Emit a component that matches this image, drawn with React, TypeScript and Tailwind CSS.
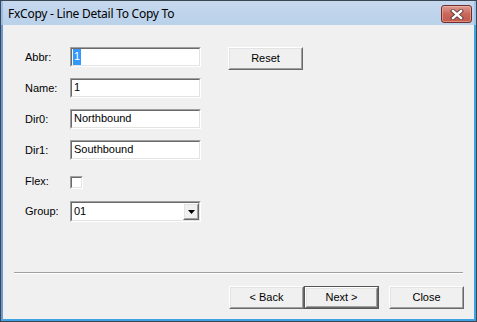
import React from "react";

function Sunken({ className = "", children }: { className?: string; children?: React.ReactNode }) {
  return (
    <div className={"border border-t-[#a0a0a0] border-l-[#a0a0a0] border-r-white border-b-white " + className}>
      <div className="w-full h-full border border-t-[#696969] border-l-[#696969] border-r-[#e3e3e3] border-b-[#e3e3e3] bg-white flex">
        {children}
      </div>
    </div>
  );
}

function Raised({ className = "", children }: { className?: string; children?: React.ReactNode }) {
  return (
    <div className={"border border-t-white border-l-white border-r-[#696969] border-b-[#696969] bg-[#f0f0f0] " + className}>
      <div className="w-full h-full border border-t-[#e3e3e3] border-l-[#e3e3e3] border-r-[#a0a0a0] border-b-[#a0a0a0] flex items-center justify-center">
        {children}
      </div>
    </div>
  );
}

function Btn({ label, isDefault = false }: { label: string; isDefault?: boolean }) {
  if (isDefault) {
    return (
      <div className="w-[75px] h-[23px] border border-[#555555]">
        <Raised className="w-full h-full">
          <span className="text-[11px] leading-[13px] text-black">{label}</span>
        </Raised>
      </div>
    );
  }
  return (
    <Raised className="w-[75px] h-[23px]">
      <span className="text-[11px] leading-[13px] text-black">{label}</span>
    </Raised>
  );
}

function Row({ label, value, selected = false }: { label: string; value: string; selected?: boolean }) {
  return (
    <div className="flex items-start h-[20px] mb-[11px]">
      <div className="w-[45px] mt-[4px] text-[11px] leading-[13px] text-black">{label}</div>
      <Sunken className="w-[131px] h-[20px]">
        <div className="pl-[1px] h-full text-[11px] leading-[15px] text-black flex items-start">
          {selected ? (
            <span className="bg-[#3399ff] text-white px-[1px] h-[16px] leading-[15px] inline-block">{value}</span>
          ) : (
            <span className="pl-[1px]">{value}</span>
          )}
        </div>
      </Sunken>
    </div>
  );
}

export default function App() {
  return (
    <div className="w-[477px] h-[322px] border border-[#3b4654] flex flex-col bg-[#b9d1ea] font-['Liberation_Sans',Arial,sans-serif] overflow-hidden">
      {/* title bar */}
      <div className="h-[24px] flex items-start bg-gradient-to-b from-[#c6d8ee] to-[#b9d1ea] border-l-2 border-l-[#9cbde3] border-r-2 border-r-[#9cc3e8]">
        <div className="pl-[5px] pt-[5px] font-['Noto_Sans',sans-serif] text-[12px] leading-[16px] tracking-[-0.25px] text-black flex-1">
          FxCopy - Line Detail To Copy To
        </div>
        <div className="mt-[4px] mr-[2px] w-[31px] h-[18px] rounded-[3px] border border-[#6e2e2a] bg-gradient-to-b from-[#dd9c92] via-[#c9675b] to-[#c35a4d] flex items-center justify-center shadow-[inset_0_0_0_1px_rgba(255,200,190,0.45)]">
          <svg width="14" height="11" viewBox="0 0 14 11">
            <path d="M3 2 L11 9 M11 2 L3 9" stroke="#5c3a38" strokeWidth="4.2" strokeLinecap="square" />
            <path d="M3 2 L11 9 M11 2 L3 9" stroke="#ffffff" strokeWidth="2.4" strokeLinecap="square" />
          </svg>
        </div>
      </div>
      {/* body */}
      <div className="flex-1 flex border-l-2 border-l-[#6a9bd0] border-r-2 border-r-[#3fa3e3] border-b-2 border-b-[#3fa3e3]">
        <div className="flex-1 bg-[#f0f0f0] flex flex-col">
          <div className="flex items-start pt-[22px] pl-[22px]">
            <div className="flex flex-col">
              <Row label="Abbr:" value="1" selected />
              <Row label="Name:" value="1" />
              <Row label="Dir0:" value="Northbound" />
              <Row label="Dir1:" value="Southbound" />
              <div className="flex items-start h-[20px] mb-[10px]">
                <div className="w-[45px] mt-[4px] text-[11px] leading-[13px] text-black">Flex:</div>
                <Sunken className="w-[13px] h-[13px] mt-[5px]" />
              </div>
              <div className="flex items-start h-[21px]">
                <div className="w-[45px] mt-[4px] text-[11px] leading-[13px] text-black">Group:</div>
                <Sunken className="w-[131px] h-[21px]">
                  <div className="flex-1 pl-[2px] text-[11px] leading-[16px] text-black">01</div>
                  <Raised className="w-[16px] h-[17px]">
                    <svg width="7" height="4" viewBox="0 0 7 4">
                      <path d="M0 0 H7 L3.5 4 Z" fill="#000" />
                    </svg>
                  </Raised>
                </Sunken>
              </div>
            </div>
            <div className="ml-[27px]">
              <Btn label="Reset" />
            </div>
          </div>
          <div className="flex-1" />
          <div className="mx-[11px] border-t border-t-[#a0a0a0] border-b border-b-white" />
          <div className="flex justify-end pr-[10px] pt-[12px] pb-[10px]">
            <Btn label="< Back" />
            <Btn label="Next >" isDefault />
            <div className="ml-[10px]">
              <Btn label="Close" />
            </div>
          </div>
        </div>
      </div>
    </div>
  );
}
